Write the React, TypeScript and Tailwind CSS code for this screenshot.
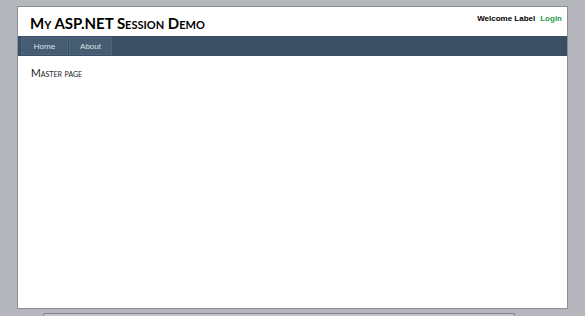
export default function App() {
  return (
    <div className="min-h-[316px] w-[585px] bg-[#b6b7bc] pt-[6px] font-['Liberation_Sans',sans-serif]">
      <div className="mx-[17px] flex h-[303px] flex-col border border-[#8a8e96] bg-white">
        {/* header */}
        <div className="flex h-[29px] items-start justify-between">
          <h1 className="pl-[12px] pt-[7px] font-['Lato',sans-serif] text-[15px] leading-[18px] font-bold text-black [font-variant:small-caps]">
            My ASP.NET Session Demo
          </h1>
          <div className="pr-[5px] pt-[7px] text-[8px] leading-[10px] font-bold">
            <span className="text-black">Welcome Label</span>
            <a className="ml-[5px] text-[#2a9d4a]">Login</a>
          </div>
        </div>
        {/* menu */}
        <div className="flex h-[20px] bg-[#3a4f63] pl-[3px] pt-[1px]">
          <div className="flex h-[18px] w-[47px] items-center justify-center border border-[#4d6580] bg-[#465c71] pt-[2px] text-[8px] text-[#dde4ec]">
            Home
          </div>
          <div className="ml-[1px] flex h-[18px] w-[43px] items-center justify-center border border-[#4d6580] bg-[#465c71] pt-[2px] text-[8px] text-[#dde4ec]">
            About
          </div>
        </div>
        {/* main */}
        <div className="flex-1 px-[13px] pt-[11px]">
          <h2 className="font-['Lato',sans-serif] text-[10.5px] leading-[12px] text-[#222] [font-variant:small-caps]">Master page</h2>
        </div>
      </div>
      <div className="mx-auto mt-[4px] h-[4px] w-[472px] translate-x-[-14px] rounded-t-[2px] border-x border-t border-[#7d8189] bg-[#c4c5ca]" />
    </div>
  );
}
